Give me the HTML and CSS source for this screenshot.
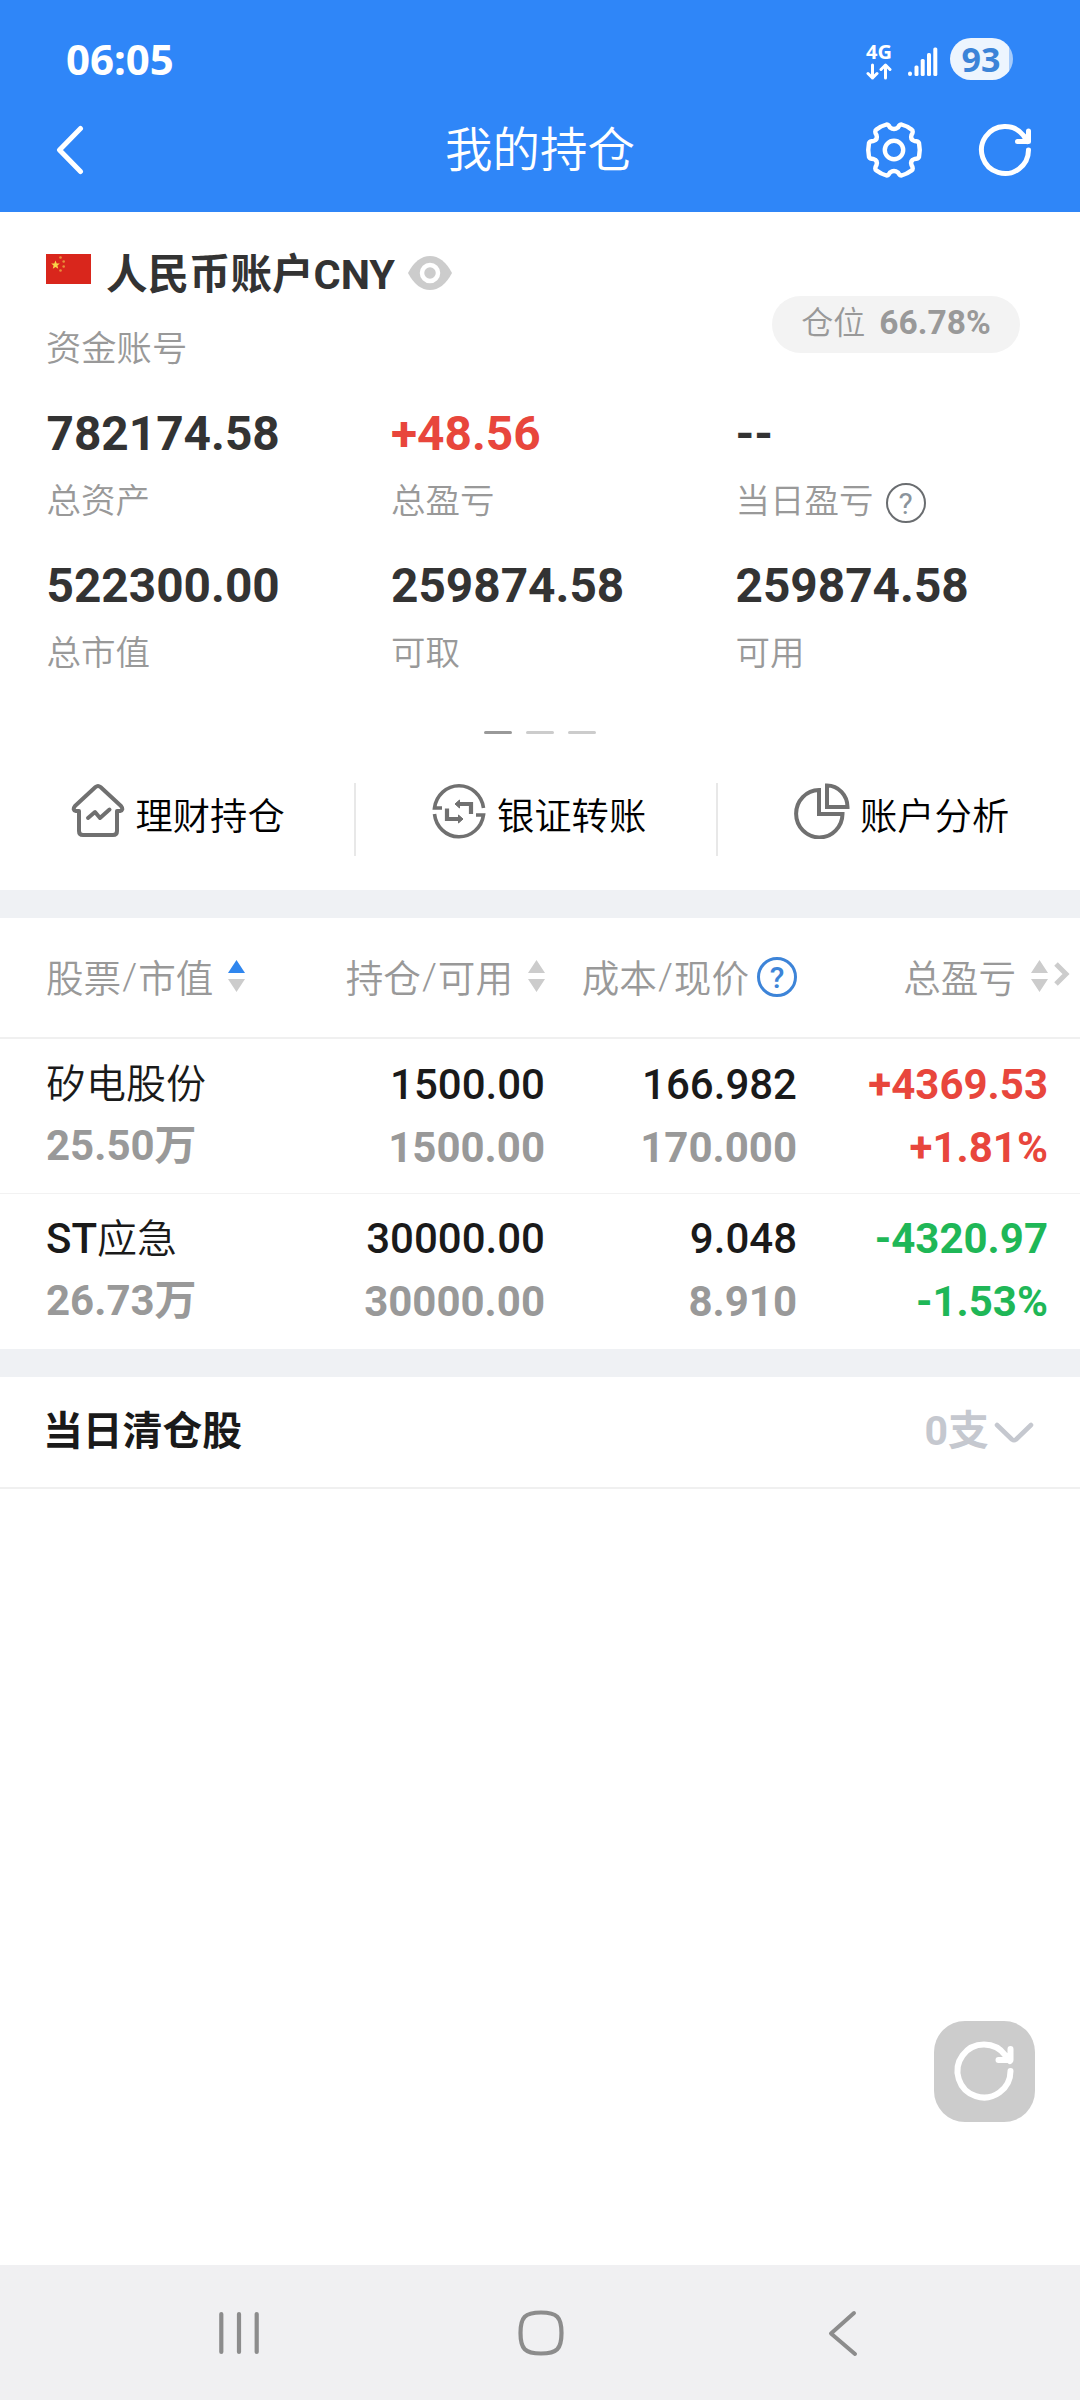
FILE: index.html
```html
<!DOCTYPE html>
<html lang="zh-CN">
<head>
<meta charset="utf-8">
<title>我的持仓</title>
<link rel="stylesheet" href="styles.css">
</head>
<body>
<div class="screen">
  <header class="top">
    <div class="status">
      <span class="clock">06:05</span>
      <div class="status-icons">
        <div class="net">
          <span class="net-type">4G</span>
          <svg width="26" height="17" viewBox="0 0 26 17" fill="none" stroke="#fff" stroke-width="3" stroke-linecap="round" stroke-linejoin="round"><path d="M6.500 2v13M2 10.500l4.500 4.500 4.500-4.500M19.500 15V2M15 6.500L19.500 2l4.500 4.500"/></svg>
        </div>
        <svg class="signal" width="30" height="30" viewBox="0 0 30 30" fill="#fff"><rect x="0" y="24.500" width="4" height="4.500" rx="2"/><rect x="6.500" y="18.500" width="4" height="10.500" rx="1.500"/><rect x="12.700" y="12" width="4" height="17" rx="1.500"/><rect x="19" y="6" width="4" height="23" rx="1.500"/><rect x="25.300" y="0.500" width="4" height="28.500" rx="1.500"/></svg>
        <span class="battery">93</span>
      </div>
    </div>
    <div class="titlebar">
      <svg class="back" width="30" height="52" viewBox="0 0 30 52" fill="none" stroke="#fff" stroke-width="5" stroke-linecap="round" stroke-linejoin="round"><path d="M26.500 4.500L5.500 26l21 21.500"/></svg>
      <h1 class="title">我的持仓</h1>
      <div class="tools">
        <svg width="60" height="60" viewBox="-30 -30 60 60" fill="none" stroke="#fff" stroke-width="4.400" stroke-linejoin="round"><path d="M25 -7Q26.500 0 25 7Q24 9 20.500 9Q16 10.500 17.500 15Q20 19 17.500 20.500Q13 24 7.500 25.500Q5.500 25.500 4 22.500Q0 19.500 -4 22.500Q-5.500 25.500 -7.500 25.500Q-13 24 -17.500 20.500Q-20 19 -17.500 15Q-16 10.500 -20.500 9Q-24 9 -25 7Q-26.500 0 -25 -7Q-24 -9 -20.500 -9Q-16 -10.500 -17.500 -15Q-20 -19 -17.500 -20.500Q-13 -24 -7.500 -25.500Q-5.500 -25.500 -4 -22.500Q0 -19.500 4 -22.500Q5.500 -25.500 7.500 -25.500Q13 -24 17.500 -20.500Q20 -19 17.500 -15Q16 -10.500 20.500 -9Q24 -9 25 -7Z"/><circle r="9.200"/></svg>
        <svg width="60" height="60" viewBox="-30 -30 60 60" fill="none" stroke="#fff" stroke-width="5" stroke-linecap="round" stroke-linejoin="round"><path d="M23.500 0A23.500 23.500 0 1 1 18.500 -14.500L22.500 -8.500M23.500 -19V-8.500H12.500"/></svg>
      </div>
    </div>
  </header>

  <section class="account">
    <div class="account-head">
      <div class="account-info">
        <div class="account-name">
          <svg class="flag" width="45" height="30" viewBox="0 0 45 30"><rect width="45" height="30" fill="#d9261c"/><path d="M9.500 6.500l1.200 2.900 3.100.2-2.400 2 .8 3.100-2.700-1.700-2.700 1.700.8-3.100-2.400-2 3.100-.2z" fill="#f9d548"/><g fill="#e8903a"><circle cx="14.500" cy="3.500" r="1.300"/><circle cx="17.700" cy="7.500" r="1.300"/><circle cx="17.700" cy="12.500" r="1.300"/><circle cx="14.500" cy="16.500" r="1.300"/></g></svg>
          <span>人民币账户CNY</span>
          <svg class="eye" width="44" height="34" viewBox="0 0 44 34"><path d="M0 17Q9 0 22 0T44 17Q35 34 22 34T0 17Z" fill="#ccc"/><circle cx="22" cy="17" r="8" fill="#ccc" stroke="#fff" stroke-width="4.500"/></svg>
        </div>
        <div class="account-no">资金账号</div>
      </div>
      <div class="ratio"><span>仓位</span><b>66.78%</b></div>
    </div>

    <div class="stats">
      <div class="stat"><div class="value">782174.58</div><div class="label">总资产</div></div>
      <div class="stat"><div class="value up">+48.56</div><div class="label">总盈亏</div></div>
      <div class="stat"><div class="value">--</div><div class="label">当日盈亏<span class="help">?</span></div></div>
      <div class="stat"><div class="value">522300.00</div><div class="label">总市值</div></div>
      <div class="stat"><div class="value">259874.58</div><div class="label">可取</div></div>
      <div class="stat"><div class="value">259874.58</div><div class="label">可用</div></div>
    </div>

    <div class="pager"><i class="on"></i><i></i><i></i></div>

    <nav class="shortcuts">
      <a class="shortcut">
        <svg width="54" height="56" viewBox="0 0 54 56" fill="none" stroke="#707070" stroke-width="4" stroke-linejoin="round" stroke-linecap="round"><path d="M24.500 4Q27 2 29.500 4L50 23Q53 27 49 28H46V48Q46 52 42 52H12Q8 52 8 48V28H5Q1 27 4 23Z"/><path d="M17 35l7-6 5 6 9.500-8.500"/></svg>
        <span>理财持仓</span>
      </a>
      <a class="shortcut">
        <svg width="54" height="56" viewBox="0 0 54 56" fill="none" stroke="#707070" stroke-width="3.600"><path d="M10 25H2.500A24.700 25.500 0 0 1 51.500 25M44 32H51.500A24.700 25.500 0 0 1 2.500 31"/><path d="M15 25.500V36H27M39 31V21H27" stroke-width="4.200"/><path d="M26.500 32v8l4.500-4zM27.500 17v8l-4.500-4z" fill="#707070" stroke-width="1"/></svg>
        <span>银证转账</span>
      </a>
      <a class="shortcut">
        <svg width="56" height="56" viewBox="0 0 56 56" fill="none" stroke="#707070" stroke-width="4"><path d="M25 7A23.200 23.700 0 1 0 48.500 31H25Z"/><path d="M33 2.500V24H53.500A20.500 21.500 0 0 0 33 2.500Z"/></svg>
        <span>账户分析</span>
      </a>
    </nav>
  </section>

  <section class="holdings">
    <div class="cols thead">
      <div class="th first">股票<i>/</i>市值<svg class="sort" width="17" height="32" viewBox="0 0 17 32"><path d="M8.500 0L17 13H0z" fill="#2f86ee"/><path d="M0 19h17L8.500 32z" fill="#ccc"/></svg></div>
      <div class="th">持仓<i>/</i>可用<svg class="sort" width="17" height="32" viewBox="0 0 17 32" fill="#ccc"><path d="M8.500 0L17 13H0zM0 19h17L8.500 32z"/></svg></div>
      <div class="th">成本<i>/</i>现价<span class="help blue">?</span></div>
      <div class="th">总盈亏<svg class="sort" width="17" height="32" viewBox="0 0 17 32" fill="#ccc"><path d="M8.500 0L17 13H0zM0 19h17L8.500 32z"/></svg></div>
      <svg class="more" width="16" height="24" viewBox="0 0 16 24" fill="none" stroke="#ccc" stroke-width="5"><path d="M2 2l10 10L2 22"/></svg>
    </div>
    <div class="cols row">
      <div class="cell name"><div class="main">矽电股份</div><div class="sub">25.50万</div></div>
      <div class="cell"><div class="main">1500.00</div><div class="sub">1500.00</div></div>
      <div class="cell"><div class="main">166.982</div><div class="sub">170.000</div></div>
      <div class="cell up"><div class="main">+4369.53</div><div class="sub">+1.81%</div></div>
    </div>
    <div class="cols row">
      <div class="cell name"><div class="main"><span class="latin">ST</span>应急</div><div class="sub">26.73万</div></div>
      <div class="cell"><div class="main">30000.00</div><div class="sub">30000.00</div></div>
      <div class="cell"><div class="main">9.048</div><div class="sub">8.910</div></div>
      <div class="cell down"><div class="main">-4320.97</div><div class="sub">-1.53%</div></div>
    </div>
  </section>

  <section class="cleared">
    <h2>当日清仓股</h2>
    <div class="count">0支<svg width="40" height="24" viewBox="0 0 40 24" fill="none" stroke="#c5c8cf" stroke-width="4.600" stroke-linecap="round" stroke-linejoin="round"><path d="M3 4l15 14.500q2 1.500 4 0L37 4"/></svg></div>
  </section>

  <main class="blank">
    <button class="fab">
      <svg width="70" height="70" viewBox="-34 -34 70 70" fill="none" stroke="#fff" stroke-width="6" stroke-linecap="round" stroke-linejoin="round"><path d="M26.500 0A26.500 26.500 0 1 1 21.500 -15.500L26 -10M26.500 -22V-11H14.500"/></svg>
    </button>
  </main>

  <footer class="navbar">
    <svg width="44" height="50" viewBox="0 0 44 50" stroke="#8c8c8c" stroke-width="4.200" stroke-linecap="round"><path d="M4.300 6v38M22 6v38M39.700 6v38"/></svg>
    <svg width="50" height="50" viewBox="2 0 50 50" fill="none" stroke="#8c8c8c" stroke-width="4.200"><path d="M25 4.500C41 4.500 45.500 9 45.500 25S41 45.500 25 45.500 4.500 41 4.500 25 9 4.500 25 4.500Z"/></svg>
    <svg width="34" height="50" viewBox="0 0 34 50" fill="none" stroke="#8c8c8c" stroke-width="4" stroke-linecap="round" stroke-linejoin="round"><path d="M29 5L6 25.500 30 46"/></svg>
  </footer>
</div>
</body>
</html>
```
FILE: styles.css
```css
* { box-sizing: border-box; }

body {
  margin: 0;
  font-family: Roboto, "Noto Sans CJK SC", sans-serif;
  color: #333;
  background: #fff;
}

svg { display: block; flex: none; }

h1, h2 { margin: 0; }

.screen {
  display: flex;
  flex-direction: column;
  width: 1080px;
  height: 2400px;
}

/* status bar and title */
.top {
  height: 212px;
  background: #2f86f8;
  color: #fff;
}

.status {
  display: flex;
  justify-content: space-between;
  align-items: center;
  height: 118px;
  padding: 0 67px 0 66px;
}

.clock {
  font: 700 42px/48px "Noto Sans", sans-serif;
}

.status-icons { display: flex; align-items: center; }

.net {
  display: flex;
  flex-direction: column;
  align-items: center;
  gap: 2px;
  margin-top: 4px;
}

.net-type {
  font: 700 20px/18px "Noto Sans", sans-serif;
}

.signal { margin: 6px 12px 0 16px; }

.battery {
  width: 63px;
  height: 42px;
  padding-right: 1px;
  border-radius: 21px;
  background: linear-gradient(90deg, #edf5fe 59px, #a7ccfb 59px);
  color: #3b84d8;
  font: 700 34px/42px "Noto Sans", sans-serif;
  text-align: center;
}

.titlebar {
  display: grid;
  grid-template-columns: 1fr auto 1fr;
  align-items: center;
  height: 64px;
  padding: 0 45px 0 54px;
}

.title {
  padding-top: 3px;
  font-size: 47.5px;
  line-height: 61px;
  font-weight: 350;
  margin-left: -9px;
}

.tools {
  display: flex;
  justify-content: flex-end;
  gap: 51px;
}

/* account summary */
.account { height: 678px; }

.account-head {
  display: flex;
  justify-content: space-between;
  height: 192px;
  padding: 32px 60px 0 46px;
}

.account-name {
  display: flex;
  align-items: center;
  height: 60px;
  font-size: 41.5px;
  line-height: 61px;
  font-weight: 700;
}

.flag { margin: -10px 15px 0 0; }
.eye { margin: -3px 0 0 13px; }

.account-no {
  margin-top: 25px;
  font-size: 35.3px;
  line-height: 40px;
  font-weight: 350;
  color: #999;
}

.ratio {
  display: flex;
  justify-content: center;
  gap: 14px;
  width: 248px;
  height: 57px;
  margin-top: 52px;
  border-radius: 29px;
  background: #f3f3f3;
  color: #999;
  font-size: 32px;
  line-height: 54px;
  font-weight: 350;
}

.ratio b { font-size: 33.5px; font-weight: 700; }

.stats {
  display: grid;
  grid-template-columns: repeat(3, 344.5px);
  grid-auto-rows: 152px;
  padding-left: 46.5px;
}

.value {
  font-size: 47.8px;
  line-height: 60px;
  font-weight: 700;
}

.label {
  display: flex;
  align-items: center;
  height: 44px;
  margin-top: 15px;
  font-size: 34.5px;
  line-height: 44px;
  font-weight: 350;
  color: #999;
}

.help {
  width: 40px;
  height: 40px;
  margin: 3px 0 0 12px;
  border: 2px solid #6a6d70;
  border-radius: 50%;
  color: #8b949c;
  font-size: 30px;
  line-height: 37px;
  font-weight: 400;
  text-align: center;
}

.help.blue {
  margin: 3px 0 0 8px;
  border: 3px solid #3d84d8;
  color: #3d84d8;
  line-height: 35px;
  font-weight: 500;
}

.pager {
  display: flex;
  justify-content: center;
  gap: 14px;
  padding-top: 23px;
}

.pager i {
  width: 28px;
  height: 3px;
  border-radius: 1.5px;
  background: #ccc;
}

.pager .on { background: #999; }

.shortcuts {
  display: grid;
  grid-template-columns: 356px 362px 362px;
  height: 73px;
  margin-top: 49px;
}

.shortcut {
  display: flex;
  gap: 11px;
  padding-left: 70.5px;
  border-right: 2px solid #e8e8e8;
  font-size: 37.3px;
  line-height: 68px;
  font-weight: 350;
  color: #000;
}

.shortcut + .shortcut { padding-left: 76px; }
.shortcut:last-child { gap: 10px; border-right: 0; }

/* holdings table */
.holdings { border-top: 28px solid #eff1f4; }

.cols {
  display: grid;
  grid-template-columns: 250px 249px 252px 251px 32px;
  padding-left: 46px;
}

.thead {
  height: 121px;
  border-bottom: 2px solid #f0f0f0;
  font-size: 37.6px;
  font-weight: 350;
  color: #999;
}

.th {
  display: flex;
  align-items: center;
  justify-content: flex-end;
  padding-bottom: 4px;
}

.th i { width: 17px; font-style: normal; text-align: center; }

.first { justify-content: flex-start; }

.sort { margin: 1px 0 0 15px; }

.more { align-self: center; margin: -7px 0 0 6px; }

.row {
  height: 155px;
  padding-top: 21px;
  border-bottom: 1px solid #f2f2f2;
}

.row:last-child { padding-top: 20px; border-bottom: 0; }

.cell {
  text-align: right;
  font-size: 42px;
  line-height: 50px;
}

.main { font-weight: 500; color: #1a1a1a; }
.sub { margin-top: 13px; font-weight: 700; color: #999; }

.name { text-align: left; }
.name .main { font-size: 40px; font-weight: 350; }
.name .latin { font-size: 42px; font-weight: 500; }
.name .sub { margin-top: 11px; }

.up, .up .main, .up .sub { color: #e8463c; font-weight: 700; }
.down .main, .down .sub { color: #1fb757; font-weight: 700; }

/* positions closed today */
.cleared {
  display: flex;
  justify-content: space-between;
  height: 140px;
  padding: 0 46px 0 43px;
  border-top: 28px solid #eff1f4;
  border-bottom: 2px solid #f0f0f0;
  line-height: 108px;
}

.cleared h2 {
  padding-top: 1px;
  font-size: 39.8px;
  font-weight: 700;
  color: #1a1a1a;
}

.count {
  display: flex;
  align-items: center;
  gap: 5px;
  height: 108px;
  font-size: 41px;
  font-weight: 700;
  color: #c5c8cf;
}

.count svg { margin-top: 4px; }

.blank {
  flex: 1;
  display: flex;
  flex-direction: column;
  align-items: flex-end;
  justify-content: flex-end;
  padding: 0 45px 143px 0;
}

.fab {
  display: flex;
  align-items: center;
  justify-content: center;
  width: 101px;
  height: 101px;
  padding: 0;
  border: 0;
  border-radius: 31px;
  background: #ccc;
}

.navbar {
  display: flex;
  align-items: center;
  justify-content: space-between;
  height: 135px;
  padding: 0 221px 0 217px;
  background: #f0f0f2;
}
```
